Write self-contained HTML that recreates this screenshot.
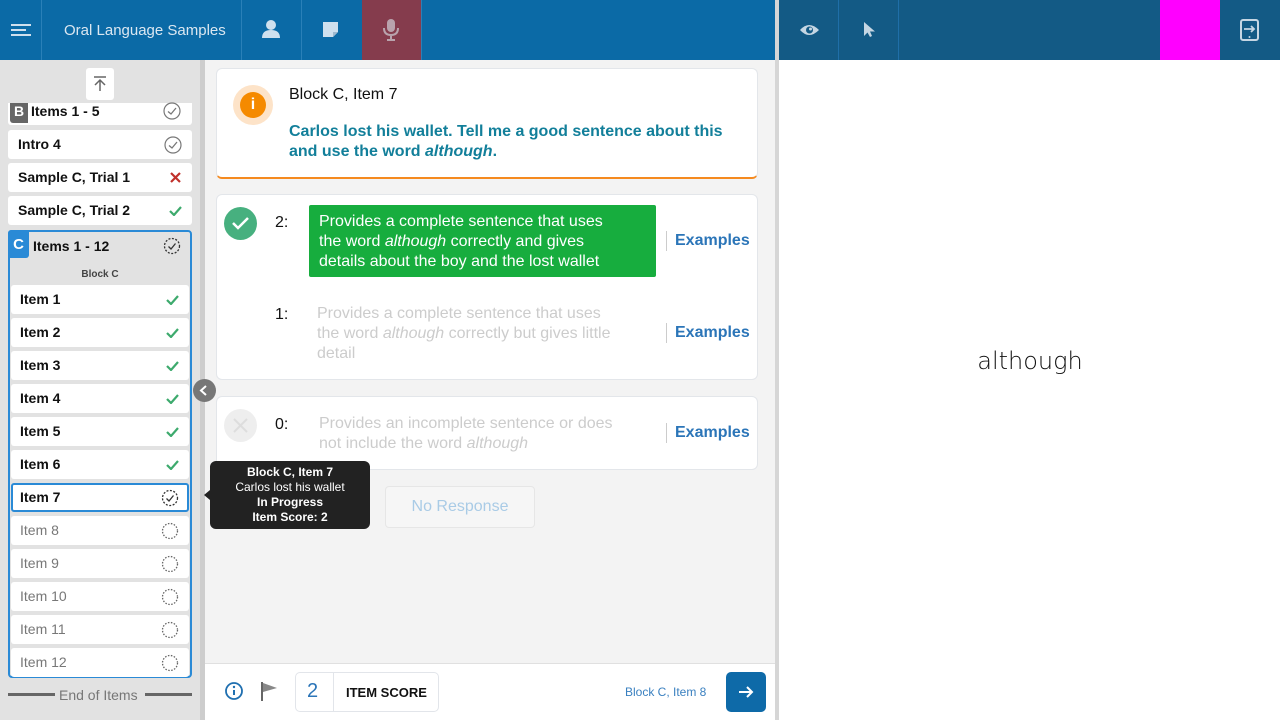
<!DOCTYPE html>
<html><head><style>
*{box-sizing:border-box;margin:0;padding:0}
body{width:1280px;height:720px;overflow:hidden;font-family:"Liberation Sans",sans-serif;position:relative;background:#fff}
.a{position:absolute}
.hdr{top:0;height:60px;background:#0b6aa6}
.sep{position:absolute;top:0;width:1px;height:60px;background:#2a80b8}
.row{position:absolute;left:8px;width:184px;height:29px;background:#fff;border-radius:3px;font-size:14px;font-weight:bold;color:#111;padding-left:10px;line-height:29px}
.in{left:11px;width:178px;padding-left:9px}
.g{font-weight:normal;color:#777}
.ic{position:absolute;right:10px;top:6px}
.card{position:absolute;background:#fff;border:1px solid #e3e6ea;border-radius:6px}
.ex{position:absolute;left:666px;border-left:1px solid #ccc;padding-left:8px;font-size:16px;font-weight:bold;color:#2b75b8;height:20px;line-height:20px}
.desc{position:absolute;font-size:16px;line-height:20px;color:#ccc}
</style></head><body>
<div class="a hdr" style="left:0;width:775px"></div>
<div class="sep" style="left:41px"></div><div class="sep" style="left:241px"></div><div class="sep" style="left:301px"></div>
<div class="a" style="left:362px;top:0;width:59px;height:60px;background:#853c4d"></div>
<div class="sep" style="left:421px"></div>
<svg class="a" style="left:11px;top:24px" width="21" height="12"><path d="M0 1H20M0 6H15M0 11H20" stroke="#cfe0ee" stroke-width="2"/></svg>
<div class="a" style="left:64px;top:22px;font-size:15px;color:#dbe7f1">Oral Language Samples</div>
<svg class="a" style="left:261px;top:19px" width="20" height="20"><circle cx="10" cy="6" r="5" fill="#cfe0ee"/><path d="M1 19 Q1 11 10 11 Q19 11 19 19Z" fill="#cfe0ee"/></svg>
<svg class="a" style="left:323px;top:22px" width="16" height="16"><path d="M0 0H15V10L10 15H0Z" fill="#cfe0ee"/><path d="M10 15V10H15" fill="#9fb9cf"/></svg>
<svg class="a" style="left:383px;top:19px" width="16" height="22"><rect x="4" y="0" width="8" height="13" rx="4" fill="#b9a3ad"/><path d="M1 9Q1 16 8 16Q15 16 15 9M8 16V21M4 21H12" stroke="#b9a3ad" stroke-width="2" fill="none"/></svg>
<div class="a" style="left:775px;top:0;width:4px;height:720px;background:#d6d6d6"></div>
<div class="a" style="left:779px;top:0;width:501px;height:60px;background:#135a85"></div>
<div class="sep" style="left:838px;background:#1f6fa8"></div><div class="sep" style="left:898px;background:#1f6fa8"></div>
<div class="a" style="left:1160px;top:0;width:60px;height:60px;background:#ff00ff"></div>
<svg class="a" style="left:800px;top:23px" width="19" height="14"><path d="M0 7Q9 -3 19 7Q9 17 0 7Z" fill="#c5d6e3"/><circle cx="9.5" cy="7" r="3.5" fill="#135a85"/><circle cx="10.5" cy="6" r="1.5" fill="#c5d6e3"/></svg>
<svg class="a" style="left:863px;top:22px" width="12" height="16"><path d="M1 0V14L4.5 10.5L7 15L9 14L7 9.5H12Z" fill="#c5d6e3"/></svg>
<svg class="a" style="left:1240px;top:19px" width="19" height="22"><rect x="1" y="1" width="17" height="20" rx="2" fill="none" stroke="#c5d6e3" stroke-width="2"/><path d="M4 10H14M11 7L14 10L11 13" stroke="#c5d6e3" stroke-width="1.8" fill="none"/><circle cx="9.5" cy="18" r="1" fill="#c5d6e3"/></svg>
<div class="a" style="left:1030px;top:347px;transform:translateX(-50%);font-size:24px;color:#111;font-family:'DejaVu Sans',sans-serif;font-weight:300">although</div>

<!-- sidebar -->
<div class="a" style="left:0;top:60px;width:200px;height:660px;background:#e2e2e2"></div>
<div class="a" style="left:200px;top:60px;width:5px;height:660px;background:#cdcdcd"></div>
<div class="a" style="left:86px;top:68px;width:28px;height:32px;background:#fff;border-radius:3px"></div>
<svg class="a" style="left:92px;top:76px" width="16" height="16"><path d="M2 1H14M8 15V4M3 9L8 4L13 9" stroke="#666" stroke-width="1.5" fill="none"/></svg>
<div class="row" style="top:103px;height:22px;line-height:16px;padding-left:23px;border-radius:0 0 3px 3px">Items 1 - 5</div>
<div class="a" style="left:10px;top:103px;width:18px;height:20px;background:#666;color:#fff;font-weight:bold;font-size:14px;text-align:center;line-height:16px;border-radius:0 0 0 3px">B</div>
<svg class="a" style="left:163px;top:102px" width="18" height="18"><circle cx="9" cy="9" r="8" fill="none" stroke="#777" stroke-width="1.2"/><path d="M5 9.5L8 12L13 6" stroke="#777" stroke-width="1.3" fill="none"/></svg>
<div class="row" style="top:130px">Intro 4<svg class="ic" width="18" height="18"><circle cx="9" cy="9" r="8" fill="none" stroke="#777" stroke-width="1.2"/><path d="M5 9.5L8 12L13 6" stroke="#777" stroke-width="1.3" fill="none"/></svg></div>
<div class="row" style="top:163px">Sample C, Trial 1<svg class="ic" style="top:9px;right:11px" width="11" height="11"><path d="M1 1L10 10M10 1L1 10" stroke="#c0302b" stroke-width="2.2"/></svg></div>
<div class="row" style="top:196px">Sample C, Trial 2<svg class="ic" style="top:9px;right:10px" width="13" height="11"><path d="M1 6L5 10L12 2" stroke="#3daa6d" stroke-width="2.2" fill="none"/></svg></div>
<div class="a" style="left:8px;top:230px;width:184px;height:448px;border:2px solid #2a8ad6;border-radius:4px;background:#e2e2e2"></div>
<div class="a" style="left:8px;top:230px;width:21px;height:28px;background:#2a8ad6;color:#fff;font-weight:bold;font-size:15px;text-align:center;line-height:30px;border-radius:3px 0 3px 0">C</div>
<div class="a" style="left:33px;top:238px;font-size:14px;font-weight:bold;color:#111">Items 1 - 12</div>
<svg class="a" style="left:163px;top:237px" width="18" height="18"><circle cx="9" cy="9" r="7.5" fill="none" stroke="#333" stroke-width="1.3" stroke-dasharray="2 1.5"/><path d="M5.5 9.5L8 12L12.5 6.5" stroke="#333" stroke-width="1.3" fill="none"/></svg>
<div class="a" style="left:8px;top:269px;width:184px;text-align:center;font-size:10px;font-weight:bold;color:#444">Block C</div>
<div class="row in" style="top:285px">Item 1<svg class="ic" style="top:9px" width="13" height="11"><path d="M1 6L5 10L12 2" stroke="#3daa6d" stroke-width="2.2" fill="none"/></svg></div>
<div class="row in" style="top:318px">Item 2<svg class="ic" style="top:9px" width="13" height="11"><path d="M1 6L5 10L12 2" stroke="#3daa6d" stroke-width="2.2" fill="none"/></svg></div>
<div class="row in" style="top:351px">Item 3<svg class="ic" style="top:9px" width="13" height="11"><path d="M1 6L5 10L12 2" stroke="#3daa6d" stroke-width="2.2" fill="none"/></svg></div>
<div class="row in" style="top:384px">Item 4<svg class="ic" style="top:9px" width="13" height="11"><path d="M1 6L5 10L12 2" stroke="#3daa6d" stroke-width="2.2" fill="none"/></svg></div>
<div class="row in" style="top:417px">Item 5<svg class="ic" style="top:9px" width="13" height="11"><path d="M1 6L5 10L12 2" stroke="#3daa6d" stroke-width="2.2" fill="none"/></svg></div>
<div class="row in" style="top:450px">Item 6<svg class="ic" style="top:9px" width="13" height="11"><path d="M1 6L5 10L12 2" stroke="#3daa6d" stroke-width="2.2" fill="none"/></svg></div>
<div class="row in" style="top:483px;border:2px solid #2a8ad6;line-height:25px;padding-left:7px">Item 7<svg class="ic" style="top:4px;right:8px" width="18" height="18"><circle cx="9" cy="9" r="7.5" fill="none" stroke="#333" stroke-width="1.3" stroke-dasharray="2 1.5"/><path d="M5.5 9.5L8 12L12.5 6.5" stroke="#333" stroke-width="1.3" fill="none"/></svg></div>
<div class="row in g" style="top:516px">Item 8<svg class="ic" width="18" height="18"><circle cx="9" cy="9" r="7.5" fill="none" stroke="#666" stroke-width="1.3" stroke-dasharray="1.5 1.5"/></svg></div>
<div class="row in g" style="top:549px">Item 9<svg class="ic" width="18" height="18"><circle cx="9" cy="9" r="7.5" fill="none" stroke="#666" stroke-width="1.3" stroke-dasharray="1.5 1.5"/></svg></div>
<div class="row in g" style="top:582px">Item 10<svg class="ic" width="18" height="18"><circle cx="9" cy="9" r="7.5" fill="none" stroke="#666" stroke-width="1.3" stroke-dasharray="1.5 1.5"/></svg></div>
<div class="row in g" style="top:615px">Item 11<svg class="ic" width="18" height="18"><circle cx="9" cy="9" r="7.5" fill="none" stroke="#666" stroke-width="1.3" stroke-dasharray="1.5 1.5"/></svg></div>
<div class="row in g" style="top:648px">Item 12<svg class="ic" width="18" height="18"><circle cx="9" cy="9" r="7.5" fill="none" stroke="#666" stroke-width="1.3" stroke-dasharray="1.5 1.5"/></svg></div>
<div class="a" style="left:8px;top:693px;width:47px;height:3px;background:#666"></div>
<div class="a" style="left:145px;top:693px;width:47px;height:3px;background:#666"></div>
<div class="a" style="left:59px;top:687px;font-size:14px;color:#777">End of Items</div>

<!-- main -->
<div class="a" style="left:205px;top:60px;width:570px;height:604px;background:#f3f3f3"></div>
<div class="a" style="left:205px;top:663px;width:570px;height:57px;background:#fff;border-top:1px solid #e0e0e0"></div>
<div class="card" style="left:216px;top:68px;width:542px;height:111px;border-bottom:2px solid #f58a1f"></div>
<div class="a" style="left:233px;top:85px;width:40px;height:40px;border-radius:50%;background:#fde3c8"></div>
<div class="a" style="left:240px;top:92px;width:26px;height:26px;border-radius:50%;background:#f58a00;color:#fff;font-weight:bold;font-size:16px;text-align:center;line-height:26px">i</div>
<div class="a" style="left:289px;top:86px;font-size:16px;color:#111">Block C, Item 7</div>
<div class="a" style="left:289px;top:122px;font-size:16px;line-height:20px;font-weight:bold;color:#127f9a">Carlos lost his wallet. Tell me a good sentence about this<br>and use the word <i>although</i>.</div>

<div class="card" style="left:216px;top:194px;width:542px;height:186px"></div>
<div class="a" style="left:224px;top:207px;width:33px;height:33px;border-radius:50%;background:#47b07f"></div>
<svg class="a" style="left:231px;top:215px" width="19" height="16"><path d="M2 8L7 13L17 3" stroke="#fff" stroke-width="2.5" fill="none"/></svg>
<div class="a" style="left:275px;top:214px;font-size:16px;color:#111">2:</div>
<div class="a" style="left:309px;top:205px;width:347px;height:72px;background:#17ad3e;border-radius:2px"></div>
<div class="desc" style="left:319px;top:212px;color:#fff">Provides a complete sentence that uses<br>the word <i>although</i> correctly and gives<br>details about the boy and the lost wallet</div>
<div class="ex" style="top:231px">Examples</div>
<div class="a" style="left:275px;top:306px;font-size:16px;color:#111">1:</div>
<div class="desc" style="left:317px;top:304px">Provides a complete sentence that uses<br>the word <i>although</i> correctly but gives little<br>detail</div>
<div class="ex" style="top:323px">Examples</div>

<div class="card" style="left:216px;top:396px;width:542px;height:74px"></div>
<div class="a" style="left:224px;top:409px;width:33px;height:33px;border-radius:50%;background:#eee"></div>
<svg class="a" style="left:233px;top:418px" width="15" height="15"><path d="M1 1L14 14M14 1L1 14" stroke="#ddd" stroke-width="2"/></svg>
<div class="a" style="left:275px;top:416px;font-size:16px;color:#111">0:</div>
<div class="desc" style="left:319px;top:414px">Provides an incomplete sentence or does<br>not include the word <i>although</i></div>
<div class="ex" style="top:423px">Examples</div>

<div class="a" style="left:385px;top:486px;width:150px;height:42px;border:1px solid #e6e6e6;border-radius:4px;background:#f6f6f6;color:#a9cbe6;font-size:16px;text-align:center;line-height:40px">No Response</div>

<div class="a" style="left:193px;top:379px;width:23px;height:23px;border-radius:50%;background:#777"></div>
<svg class="a" style="left:198px;top:384px" width="12" height="13"><path d="M8 2L3 6.5L8 11" stroke="#fff" stroke-width="2" fill="none"/></svg>

<div class="a" style="left:210px;top:461px;width:160px;height:68px;background:#222;border-radius:6px;color:#fff;font-size:12px;text-align:center;line-height:15px;padding-top:4px"><b>Block C, Item 7</b><br>Carlos lost his wallet<br><b>In Progress</b><br><b>Item Score: 2</b></div>
<div class="a" style="left:204px;top:490px;width:0;height:0;border:5px solid transparent;border-right:6px solid #222;border-left:0"></div>

<!-- footer -->
<svg class="a" style="left:224px;top:681px" width="20" height="20"><circle cx="10" cy="10" r="8" fill="none" stroke="#1f6fb0" stroke-width="1.8"/><path d="M10 9V14" stroke="#1f6fb0" stroke-width="2"/><circle cx="10" cy="6" r="1.2" fill="#1f6fb0"/></svg>
<svg class="a" style="left:260px;top:682px" width="18" height="20"><path d="M2 0V19" stroke="#666" stroke-width="2"/><path d="M3 1L17 6L3 10Z" fill="#888"/></svg>
<div class="a" style="left:295px;top:672px;width:144px;height:40px;border:1px solid #e2e5ea;border-radius:5px;background:#fff"></div>
<div class="a" style="left:333px;top:672px;width:1px;height:40px;background:#e2e5ea"></div>
<div class="a" style="left:307px;top:680px;font-size:20px;color:#2b75b8">2</div>
<div class="a" style="left:346px;top:685px;font-size:13px;font-weight:bold;color:#111">ITEM SCORE</div>
<div class="a" style="left:625px;top:685px;font-size:12px;color:#3a80c0">Block C, Item 8</div>
<div class="a" style="left:726px;top:672px;width:40px;height:40px;border-radius:5px;background:#0e6aa8"></div>
<svg class="a" style="left:738px;top:685px" width="16" height="14"><path d="M1 7H14M9 2L14 7L9 12" stroke="#fff" stroke-width="2" fill="none"/></svg>
</body></html>
